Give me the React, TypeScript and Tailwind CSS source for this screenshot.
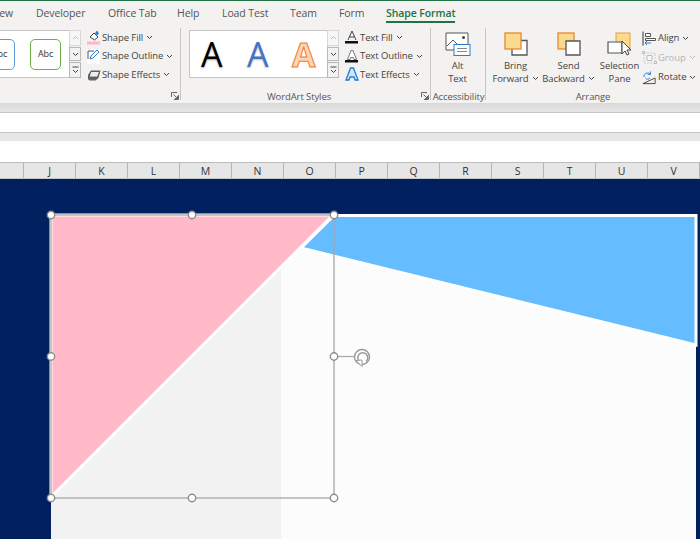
import React from "react";

const Chev = ({ c = "#444" }: { c?: string }) => (
  <svg width="7" height="5" viewBox="0 0 7 5" className="inline-block ml-[3px] shrink-0">
    <path d="M1 1l2.500 2.500L6 1" fill="none" stroke={c} strokeWidth="1" />
  </svg>
);

const Launcher = () => (
  <svg width="8" height="8" viewBox="0 0 8 8" className="absolute right-[2px] bottom-[3px]">
    <path d="M.5 5V.5H6M7.500 3v4.500H3M2.500 2.500L6.500 6.500M6.500 4v2.500H4" fill="none" stroke="#666" strokeWidth="1" />
  </svg>
);

const Scroll = () => (
  <div className="flex flex-col w-3 h-12 shrink-0 -ml-px gap-px">
    <div className="h-4 border border-[#d8d8d8] bg-[#f6f6f6] flex items-center justify-center">
      <svg width="7" height="5" viewBox="0 0 7 5"><path d="M1 4l2.500-2.500L6 4" fill="none" stroke="#bbb" /></svg>
    </div>
    <div className="h-[15px] border border-[#b8b8b8] bg-[#f3f2f1] flex items-center justify-center">
      <svg width="7" height="5" viewBox="0 0 7 5"><path d="M1 1l2.500 2.500L6 1" fill="none" stroke="#444" /></svg>
    </div>
    <div className="h-4 border border-[#b8b8b8] bg-[#f3f2f1] flex items-center justify-center">
      <svg width="7" height="8" viewBox="0 0 7 8"><path d="M.5 1h6M1 4l2.500 2.500L6 4" fill="none" stroke="#444" /></svg>
    </div>
  </div>
);

const Cmd = ({ icon, label, muted }: { icon: React.ReactNode; label: string; muted?: boolean }) => (
  <div className={`flex items-center h-[18.5px] whitespace-nowrap ${muted ? "text-[#b4b4b4]" : "text-[#444]"}`}>
    <span className="w-[15px] h-4 flex items-center justify-center shrink-0 mr-[1px]">{icon}</span>
    <span>{label}</span>
    <Chev c={muted ? "#bbb" : "#444"} />
  </div>
);

const GroupLabel = ({ children }: { children: React.ReactNode }) => (
  <div className="absolute -bottom-px left-0 right-0 h-[14px] text-center text-[#555] leading-[14px] whitespace-nowrap">{children}</div>
);

const ShapeFill = () => (
  <svg width="14" height="15" viewBox="0 0 14 15">
    <path d="M3 7l4-4 4 4-3.500 3z" fill="#fff" stroke="#444" />
    <path d="M8 3l2-2.500 2 3-2 2z" fill="#2b7cd3" />
    <rect x="0" y="11.500" width="13" height="3" fill="#ffb6c6" />
  </svg>
);
const ShapeOutline = () => (
  <svg width="14" height="15" viewBox="0 0 14 15">
    <rect x="0" y="0" width="13" height="15" fill="#fff" />
    <path d="M1 10V2h6" fill="none" stroke="#555" />
    <path d="M3 10l1-3 6-6 2 2-6 6z" fill="#fff" stroke="#2b7cd3" />
  </svg>
);
const ShapeEffects = () => (
  <svg width="14" height="14" viewBox="0 0 14 14">
    <path d="M1 7l3-4.500h9.500l-2 7.500-3 2.500H3a2 2 0 0 1-2-2z" fill="#666" />
    <path d="M4 3.500h8.500l-2 5.500H2z" fill="#eee" stroke="#444" strokeWidth=".7" />
  </svg>
);
const TextA = ({ fill = "#444" }: { fill?: string }) => (
  <svg width="14" height="15" viewBox="0 0 14 15">
    <path d="M3 10L7 1l4 9M4.500 7h5" fill="none" stroke={fill} />
    <rect x="0" y="11" width="13" height="2.500" fill="#111" />
  </svg>
);
const TextO = () => (
  <svg width="14" height="15" viewBox="0 0 14 15">
    <path d="M2.500 10.500L6 1.500h2l3.500 9H9l-.7-2H5.700l-.7 2z" fill="#fff" stroke="#555" strokeWidth=".8" />
    <rect x="0" y="11" width="13" height="2.500" fill="#111" />
  </svg>
);
const TextE = () => (
  <svg width="14" height="15" viewBox="0 0 14 15">
    <path d="M1 13L5.500 1h3L13 13h-3l-1-3H5l-1 3z" fill="#cfe6fa" stroke="#1f7fd6" strokeWidth="1.300" />
  </svg>
);
const Align = () => (
  <svg width="15" height="15" viewBox="0 0 15 15">
    <path d="M1 .5v14" stroke="#333" />
    <path d="M3.500 2.500h5v3h-5zM3.500 7.500h10v2h-10z" fill="#fff" stroke="#555" />
    <path d="M9 12H3m2-2l-2 2 2 2" fill="none" stroke="#2b7cd3" />
  </svg>
);
const Group = () => (
  <svg width="15" height="15" viewBox="0 0 15 15">
    <path d="M2 3h11v10H2z" fill="none" stroke="#ccc" strokeDasharray="2 1" />
    <path d="M5 5.500h5v5H5z" fill="#f6f6f6" stroke="#bbb" />
    <path d="M.5 1.500h2v2h-2zM12.500 11.500h2v2h-2z" fill="#fff" stroke="#bbb" />
  </svg>
);
const Rotate = () => (
  <svg width="16" height="15" viewBox="0 0 16 15">
    <path d="M1 14L14 8v6z" fill="none" stroke="#444" />
    <path d="M2 7a4 4 0 0 1 7-3M9 1v3.200H6M8.500 8a3 3 0 0 1-5 0" fill="none" stroke="#2b7cd3" />
  </svg>
);

const Forward = () => (
  <svg width="24" height="24" viewBox="0 0 24 24">
    <path d="M8 8.500h15v14.500H8z" fill="#fff" stroke="#555" strokeWidth="1.300" />
    <rect x="1" y="1" width="16" height="16" fill="#fbd98d" stroke="#e8872e" strokeWidth="1.300" />
  </svg>
);
const Backward = () => (
  <svg width="24" height="24" viewBox="0 0 24 24">
    <rect x="1" y="1" width="16" height="16" fill="#fbd98d" stroke="#e8872e" strokeWidth="1.300" />
    <path d="M9 9h14v14H9z" fill="#fff" stroke="#555" strokeWidth="1.300" />
  </svg>
);
const Pane = () => (
  <svg width="25" height="24" viewBox="0 0 25 24">
    <rect x="9" y="1" width="14" height="16" fill="#fbd98d" stroke="#e8a040" strokeWidth="1" />
    <path d="M1 10h14v11H1z" fill="#fff" stroke="#555" strokeWidth="1.200" />
    <path d="M15 9v13l3-3 2 4 2-1-2-4h4z" fill="#fff" stroke="#444" />
  </svg>
);
const AltIcon = () => (
  <svg width="26" height="25" viewBox="0 0 26 25">
    <path d="M1 18V1h22v12" fill="#fff" stroke="#555" />
    <path d="M1 18h8" stroke="#555" />
    <path d="M2 14l6-6 5 5" fill="none" stroke="#555" />
    <circle cx="18.500" cy="5.500" r="1.500" fill="#444" />
    <rect x="9" y="12.500" width="16" height="11" fill="#fff" stroke="#2b7cd3" />
    <path d="M12 16.500h10M12 19.500h10" stroke="#888" />
  </svg>
);

const Big = ({ icon, a, b, chev, w }: { icon: React.ReactNode; a: string; b: string; chev?: boolean; w: string }) => (
  <div className={`flex flex-col items-center text-[#444] leading-[13px] whitespace-nowrap ${w}`}>
    <div className="h-[24px] mb-[3px] flex items-center justify-center">{icon}</div>
    <div>{a}</div>
    <div className="flex items-center">{b}{chev && <Chev />}</div>
  </div>
);

const cols = ["J", "K", "L", "M", "N", "O", "P", "Q", "R", "S", "T", "U", "V"];

export default function App() {
  return (
    <div className="w-[700px] h-[539px] overflow-hidden flex flex-col bg-white font-['Open_Sans','Noto_Sans',sans-serif] text-[9.5px] tracking-[-0.1px]">
      <div className="h-px bg-[#217346] shrink-0" />
      {/* Tabs */}
      <div className="h-[23px] bg-[#f3f2f1] shrink-0 flex text-[#555] text-[10.5px] tracking-[-0.1px] leading-[24px] -ml-[16px] whitespace-nowrap">
        <div className="w-[52px] text-right pr-[23px]">View</div>
        <div className="w-[72px]">Developer</div>
        <div className="w-[69px]">Office Tab</div>
        <div className="w-[45px]">Help</div>
        <div className="w-[68px]">Load Test</div>
        <div className="w-[49px]">Team</div>
        <div className="w-[47px]">Form</div>
        <div className="relative w-[69px] font-semibold text-[#217346]">
          Shape Format
          <div className="absolute left-0 right-0 bottom-px h-[2px] bg-[#217346]" />
        </div>
      </div>
      {/* Ribbon */}
      <div className="h-[79px] shrink-0 bg-[#f3f2f1] flex">
        <div className="relative w-[181px] shrink-0 pt-[6px] pb-[3px] flex">
          <div className="absolute right-0 top-1 bottom-[3px] w-px bg-[#c8c6c4]" />
          <div className="w-[70px] h-12 bg-white border border-[#c6c6c6] border-l-0 flex items-center overflow-hidden shrink-0">
            <div className="w-[31px] h-[31px] -ml-[16px] mr-[15px] rounded-[5px] border border-[#5b9bd5] shrink-0 flex items-center justify-center text-[#333] text-[9px]">Abc</div>
            <div className="w-[31px] h-[31px] rounded-[5px] border border-[#70ad47] shrink-0 flex items-center justify-center text-[#333] text-[9px]">Abc</div>
          </div>
          <Scroll />
          <div className="pl-[5px] -mt-[1.5px]">
            <Cmd icon={<ShapeFill />} label="Shape Fill" />
            <Cmd icon={<ShapeOutline />} label="Shape Outline" />
            <Cmd icon={<ShapeEffects />} label="Shape Effects" />
          </div>
          <Launcher />
        </div>
        <div className="relative w-[250px] shrink-0 pt-[6px] pb-[3px] pl-2 flex">
          <div className="absolute right-0 top-1 bottom-[3px] w-px bg-[#c8c6c4]" />
          <div className="w-[139px] h-12 bg-white border border-[#c6c6c6] flex items-center shrink-0 text-[34px] leading-none pl-[11px]">
            <span className="w-[46px] text-black font-medium [text-shadow:0_1px_2px_#999]">A</span>
            <span className="w-[45px] text-[#4472c4] font-medium [text-shadow:0_1px_2px_#bbb]">A</span>
            <span className="text-[#fbd5b5] font-bold [-webkit-text-stroke:1px_#ed7d31]">A</span>
          </div>
          <Scroll />
          <div className="pl-[5px] -mt-[1.5px]">
            <Cmd icon={<TextA />} label="Text Fill" />
            <Cmd icon={<TextO />} label="Text Outline" />
            <Cmd icon={<TextE />} label="Text Effects" />
          </div>
          <Launcher />
          <div className="absolute bottom-0 left-[68px] w-[100px]"><GroupLabel>WordArt Styles</GroupLabel></div>
        </div>
        <div className="relative w-[55px] shrink-0 pt-[8px] flex justify-center">
          <div className="absolute right-0 top-1 bottom-[3px] w-px bg-[#c8c6c4]" />
          <div className="-ml-[2px]"><Big icon={<AltIcon />} a="Alt" b="Text" w="w-10" /></div>
          <GroupLabel>Accessibility</GroupLabel>
        </div>
        <div className="relative flex-1 pt-[8px] pl-[7px] flex">
          <Big icon={<Forward />} a="Bring" b="Forward" chev w="w-[45px]" />
          <div className="w-[5px]" />
          <Big icon={<Backward />} a="Send" b="Backward" chev w="w-[51px]" />
          <div className="w-[3px]" />
          <Big icon={<Pane />} a="Selection" b="Pane" w="w-[45px]" />
          <div className="flex flex-col gap-px -mt-[3px]">
            <Cmd icon={<Align />} label="Align" />
            <Cmd icon={<Group />} label="Group" muted />
            <Cmd icon={<Rotate />} label="Rotate" />
          </div>
          <GroupLabel>Arrange</GroupLabel>
        </div>
      </div>
      {/* Formula areas */}
      <div className="h-[9px] shrink-0 bg-gradient-to-b from-[#d8d8d8] to-[#e6e6e6]" />
      <div className="h-[21px] shrink-0 bg-white border-t border-b border-[#c6c6c6]" />
      <div className="h-[8px] shrink-0 bg-[#e6e6e6]" />
      <div className="h-[21px] shrink-0 bg-white" />
      {/* Column headers */}
      <div className="h-[17px] shrink-0 flex bg-[#e6e6e6] border-t border-b border-t-[#bdbdbd] border-b-[#c6c6c6] text-[#333] text-[10.5px] leading-[16px]">
        <div className="w-[24px] shrink-0 border-r border-[#b4b4b4]" />
        {cols.map((c) => (
          <div key={c} className="w-[52px] shrink-0 text-center border-r border-[#b4b4b4]">{c}</div>
        ))}
      </div>
      {/* Sheet canvas */}
      <div className="flex-1 bg-[#002060] overflow-hidden">
        <svg width="700" height="360" viewBox="0 179 700 360" className="block">
          <rect x="51" y="214" width="645" height="325" fill="#fcfcfc" />
          <rect x="51" y="214" width="230" height="325" fill="#f2f2f2" />
          <polygon points="51,215 333,215 51,497" fill="#ffb9c9" stroke="#fff" strokeWidth="3" />
          <polygon points="301,248 334,215.500 696,215.500 696,345" fill="#65bcff" stroke="#fff" strokeWidth="3" />
          <rect x="51" y="215" width="283" height="283" fill="none" stroke="#a6a6a6" strokeWidth="1.300" />
          <path d="M334 356.500H354" stroke="#a6a6a6" strokeWidth="1.200" />
          {[[51, 215], [192, 215], [334, 215], [51, 356.5], [334, 356.5], [51, 498], [192, 498], [334, 498]].map(([x, y], i) => (
            <circle key={i} cx={x} cy={y} r="3.700" fill="#fff" stroke="#8c8c8c" strokeWidth="1.400" />
          ))}
          <circle cx="362" cy="357" r="7.500" fill="#fff" stroke="#999" strokeWidth="1.400" />
          <path d="M366 361.500A5 5 0 1 0 359.500 361.500" fill="none" stroke="#999" strokeWidth="1.500" />
          <path d="M356 360.500l6-.5v6.500z" fill="#fff" stroke="#999" strokeWidth="1" />
        </svg>
      </div>
    </div>
  );
}
